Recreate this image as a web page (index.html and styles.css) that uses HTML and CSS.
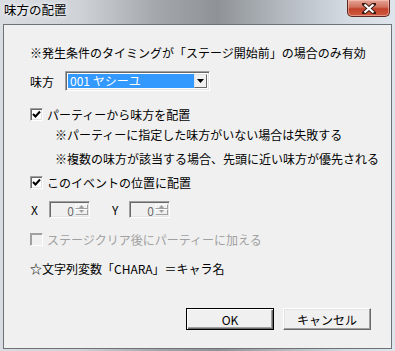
FILE: index.html
```html
<!DOCTYPE html>
<html lang="ja">
<head>
    <meta charset="UTF-8">
    <title>味方の配置</title>
    <link rel="stylesheet" href="styles.css">
</head>
<body>
    <div class="window">
        <div class="titlebar">
            <span class="title">味方の配置</span>
            <div class="close">
                <svg width="14" height="11" viewBox="0 0 14 11">
                    <path d="M2 1 L12 10 M12 1 L2 10" stroke="#3a1a14" stroke-width="4" stroke-linecap="square"/>
                    <path d="M2.5 1.5 L11.5 9.5 M11.5 1.5 L2.5 9.5" stroke="#fff" stroke-width="2.2"/>
                </svg>
            </div>
        </div>

        <div class="client">
            <p class="line notice">※発生条件のタイミングが「ステージ開始前」の場合のみ有効</p>

            <div class="allyRow">
                <span class="label">味方</span>
                <div class="combo">
                    <span class="comboValue">001 ヤシーユ</span>
                    <span class="comboBtn">
                        <svg width="7" height="4" viewBox="0 0 7 4"><path d="M0 0 H7 L3.5 4 Z" fill="#000"/></svg>
                    </span>
                </div>
            </div>

            <div class="check checkParty">
                <span class="box"><svg width="9" height="9" viewBox="0 0 9 9"><path d="M1 4 L3.5 6.5 L8 1.5" stroke="#000" stroke-width="2" fill="none"/></svg></span>
                <span>パーティーから味方を配置</span>
            </div>
            <p class="line sub subFirst">※パーティーに指定した味方がいない場合は失敗する</p>
            <p class="line sub subSecond">※複数の味方が該当する場合、先頭に近い味方が優先される</p>

            <div class="check checkPos">
                <span class="box"><svg width="9" height="9" viewBox="0 0 9 9"><path d="M1 4 L3.5 6.5 L8 1.5" stroke="#000" stroke-width="2" fill="none"/></svg></span>
                <span>このイベントの位置に配置</span>
            </div>

            <div class="spinRow">
                <span class="axis">X</span>
                <div class="spin">
                    <span class="spinValue">0</span>
                    <span class="spinBtns">
                        <span class="spinBtn"><svg width="5" height="3" viewBox="0 0 5 3"><path d="M0 3 H5 L2.5 0 Z" fill="#a0a0a0"/></svg></span>
                        <span class="spinBtn"><svg width="5" height="3" viewBox="0 0 5 3"><path d="M0 0 H5 L2.5 3 Z" fill="#a0a0a0"/></svg></span>
                    </span>
                </div>
                <span class="axis axisY">Y</span>
                <div class="spin">
                    <span class="spinValue">0</span>
                    <span class="spinBtns">
                        <span class="spinBtn"><svg width="5" height="3" viewBox="0 0 5 3"><path d="M0 3 H5 L2.5 0 Z" fill="#a0a0a0"/></svg></span>
                        <span class="spinBtn"><svg width="5" height="3" viewBox="0 0 5 3"><path d="M0 0 H5 L2.5 3 Z" fill="#a0a0a0"/></svg></span>
                    </span>
                </div>
            </div>

            <div class="check checkClear disabled">
                <span class="box"></span>
                <span>ステージクリア後にパーティーに加える</span>
            </div>

            <p class="line star">☆文字列変数「CHARA」＝キャラ名</p>

            <div class="buttons">
                <button class="btn btnDefault">OK</button>
                <button class="btn">キャンセル</button>
            </div>
        </div>
    </div>
</body>
</html>
```

FILE: styles.css
```css
body {
    margin: 0;
    font-family: "Noto Sans CJK JP", "DejaVu Sans", sans-serif;
    font-size: 12px;
    color: #000;
}

.window {
    width: 395px;
    height: 351px;
    box-sizing: border-box;
    padding: 0 3px 2px 3px;
    display: flex;
    flex-direction: column;
    background: linear-gradient(90deg, #d9dde2 0%, #cfd3d8 20%, #a3a7ab 40%, #8f9397 55%, #b4bac0 72%, #d4dbe3 88%, #dfe5ec 100%);
}

.titlebar {
    height: 24px;
    display: flex;
    justify-content: space-between;
    align-items: flex-start;
}

.title {
    margin: 2px 0 0 1px;
    font-size: 12.5px;
    line-height: 16px;
    text-shadow: 0 0 6px #f4f6f8, 0 0 3px #f4f6f8;
}

.close {
    width: 43px;
    height: 17px;
    margin-right: 2px;
    box-sizing: border-box;
    border: 1px solid #5c2a22;
    border-top: none;
    border-radius: 0 0 5px 5px;
    background: linear-gradient(180deg, #e6a596 0%, #d0705c 45%, #c2422c 55%, #cf5a40 100%);
    box-shadow: inset 0 0 0 1px rgba(255, 210, 200, 0.5);
    display: flex;
    align-items: center;
    justify-content: center;
}

.client {
    flex: 1;
    background-color: #f0f0f0;
    border: 1px solid #6e7378;
    padding: 0 20px 0 26px;
    display: flex;
    flex-direction: column;
}

.line {
    margin: 0;
    height: 16px;
    line-height: 16px;
    white-space: nowrap;
}

.notice {
    margin-top: 20px;
}

.allyRow {
    margin-top: 10px;
    height: 20px;
    display: flex;
    align-items: center;
}

.label {
    width: 35px;
}

.combo {
    width: 145px;
    height: 20px;
    box-sizing: border-box;
    border: 1px solid;
    border-color: #a0a0a0 #fff #fff #a0a0a0;
    box-shadow: inset 1px 1px 0 #696969, inset -1px -1px 0 #e3e3e3;
    background: #fff;
    display: flex;
    padding: 2px;
}

.comboValue {
    flex: 1;
    background-color: #3399ff;
    color: #fff;
    line-height: 14px;
    padding-left: 2px;
}

.comboBtn {
    width: 13px;
    box-sizing: border-box;
    background: #f0f0f0;
    border: 1px solid;
    border-color: #e3e3e3 #696969 #696969 #e3e3e3;
    display: flex;
    align-items: center;
    justify-content: center;
}

.check {
    height: 16px;
    display: flex;
    align-items: center;
    white-space: nowrap;
}

.box {
    width: 13px;
    height: 13px;
    box-sizing: border-box;
    margin-right: 4px;
    background: #fff;
    border: 1px solid;
    border-color: #a0a0a0 #fff #fff #a0a0a0;
    box-shadow: inset 1px 1px 0 #696969, inset -1px -1px 0 #e3e3e3;
    display: flex;
    align-items: center;
    justify-content: center;
}

.checkParty {
    margin-top: 15px;
}

.sub {
    padding-left: 25px;
}

.subFirst {
    margin-top: 5px;
}

.subSecond {
    margin-top: 8px;
}

.checkPos {
    margin-top: 7px;
}

.spinRow {
    margin-top: 10px;
    height: 18px;
    display: flex;
    align-items: center;
}

.axis {
    width: 18px;
    padding-left: 1px;
}

.axisY {
    width: 17px;
    margin-left: 21px;
}

.spin {
    width: 41px;
    height: 17px;
    box-sizing: border-box;
    border: 1px solid;
    border-color: #a0a0a0 #fff #fff #a0a0a0;
    box-shadow: inset 1px 1px 0 #696969, inset -1px -1px 0 #e3e3e3;
    display: flex;
    padding: 2px 1px 2px 2px;
    color: #6d6d6d;
}

.spinValue {
    flex: 1;
    text-align: right;
    line-height: 13px;
    padding-right: 1px;
}

.spinBtns {
    width: 13px;
    display: flex;
    flex-direction: column;
}

.spinBtn {
    flex: 1;
    box-sizing: border-box;
    border: 1px solid;
    border-color: #fff #a0a0a0 #a0a0a0 #fff;
    display: flex;
    align-items: center;
    justify-content: center;
}

.checkClear {
    margin-top: 13px;
}

.disabled {
    color: #a0a0a0;
}

.disabled .box {
    background: #f0f0f0;
    box-shadow: inset 1px 1px 0 #a0a0a0;
}

.star {
    margin-top: 14px;
}

.buttons {
    margin-top: 31px;
    display: flex;
    justify-content: flex-end;
    gap: 9px;
}

.btn {
    width: 88px;
    height: 22px;
    font-family: inherit;
    font-size: 12px;
    background: #f0f0f0;
    border: 1px solid;
    border-color: #fff #696969 #696969 #fff;
    box-shadow: inset -1px -1px 0 #a0a0a0, inset 1px 1px 0 #e3e3e3;
    padding: 0;
}

.btnDefault {
    border-color: #000;
    box-shadow: inset 1px 1px 0 #fff, inset -1px -1px 0 #696969, inset -2px -2px 0 #a0a0a0;
}
```
